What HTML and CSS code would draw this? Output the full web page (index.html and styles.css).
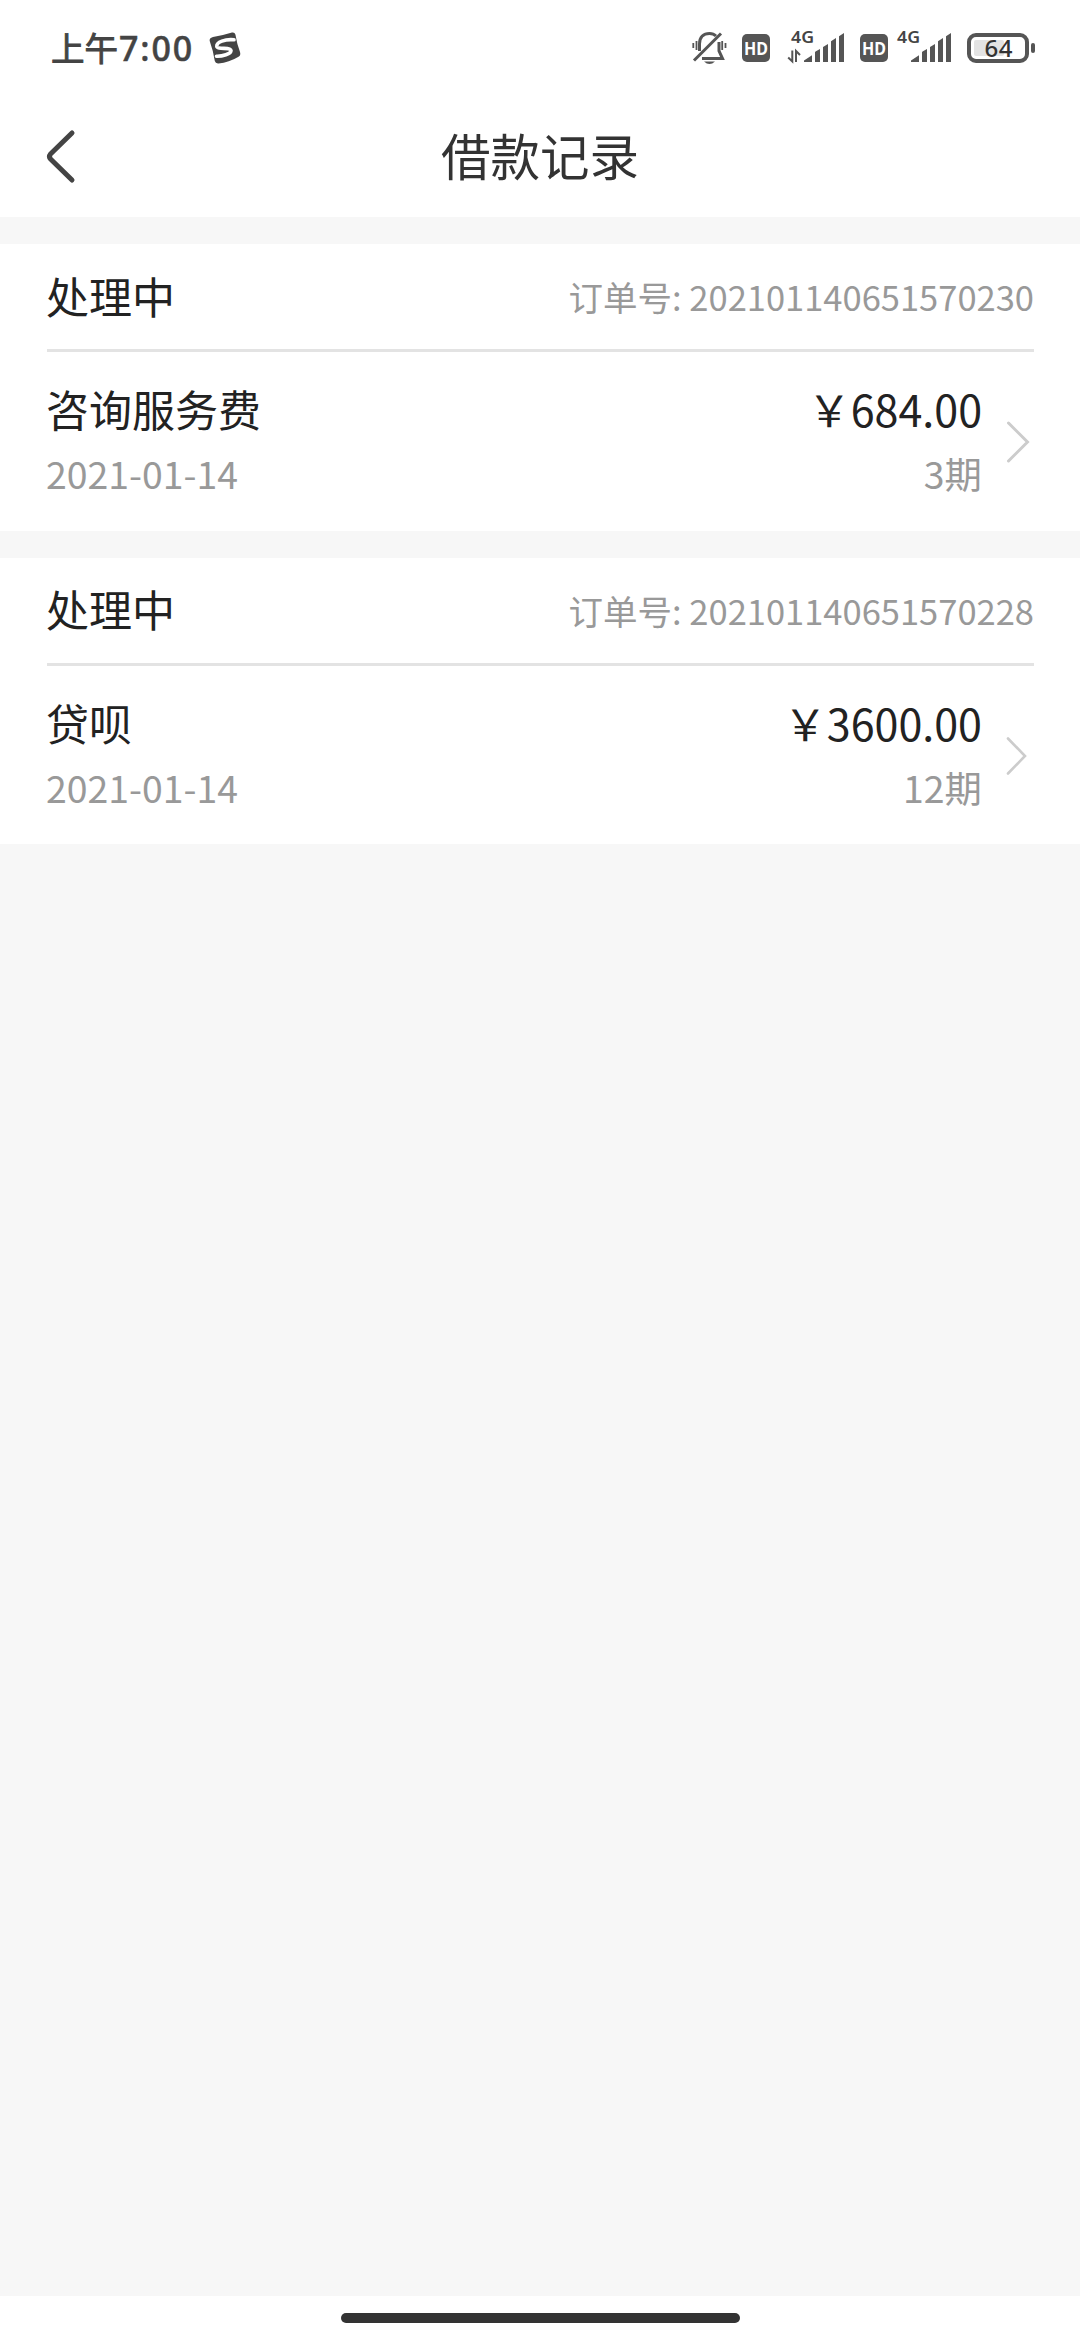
FILE: index.html
```html
<!DOCTYPE html>
<html lang="zh-CN">
<head>
<meta charset="utf-8">
<title>借款记录</title>
<link rel="stylesheet" href="styles.css">
</head>
<body>
<div class="screen">
  <div class="status-bar">
    <div class="clock"><span class="clock-period">上午</span><span class="clock-digits">7:00</span></div>
    <svg class="app-mark" width="32" height="32" viewBox="0 0 32 32">
      <path d="M4 5 Q14 3.5 23 .6 Q25.600 0 26.400 2.500 Q28 12 31 20 Q32 23.500 29.500 24.700 Q20 30.500 9.500 31.400 Q6.500 31.700 5.800 29 Q4 18 .7 9 Q0 6 4 5Z" fill="#444"/>
      <path d="M25 7.800 C16 7 7.500 10 7.800 14.200 C8.200 18 21.500 14.800 22 18.500 C22.200 22 13 24.500 7.500 24.300" fill="none" stroke="#fff" stroke-width="3.600" stroke-linecap="round"/>
    </svg>
    <div class="indicators">
      <svg class="bell" width="35" height="34" viewBox="0 0 35 34">
        <g fill="none" stroke="#555" stroke-width="3">
          <path d="M7.500 20 V13 C7.500 6 11.500 2.500 17.500 2.500 C20.500 2.500 22.500 3.500 24 5"/>
          <path d="M27 11 V20 L30.500 27.500 H10"/>
          <path d="M2 29.500 L29 2.500"/>
          <path d="M1.300 12 V17 M4.500 10 V19 M30.200 10 V19 M33.500 12 V17" stroke-width="1.800"/>
        </g>
        <path d="M12 30.500 H23 Q17.500 35.500 12 30.500Z" fill="#555"/>
      </svg>
      <svg class="hd" width="28" height="28" viewBox="0 0 28 28"><rect width="28" height="28" rx="5" fill="#555"/><text class="hd-text" x="14" y="20.800" text-anchor="middle" textLength="24" lengthAdjust="spacingAndGlyphs">HD</text></svg>
      <svg class="signal-data" width="58" height="34" viewBox="0 0 58 34">
        <text class="net-text" x="4" y="12.300" textLength="23" lengthAdjust="spacingAndGlyphs">4G</text>
        <path d="M5.300 19.500 V30.500 L1.200 26.500 M9 31 V20 L13 24" fill="none" stroke="#555" stroke-width="2"/>
        <path d="M17 31 V29.500 L25 24.200 V31Z M28 31 V21.500 Q28 20.800 28.500 20.400 L33 18 V31Z M36 31 V16 L41 13 V31Z M44 31 V10.300 L49 7 V31Z M52 31 V5.300 L57 2 V31Z" fill="#555"/>
      </svg>
      <svg class="hd" width="28" height="28" viewBox="0 0 28 28"><rect width="28" height="28" rx="5" fill="#555"/><text class="hd-text" x="14" y="20.800" text-anchor="middle" textLength="24" lengthAdjust="spacingAndGlyphs">HD</text></svg>
      <svg class="signal" width="55" height="34" viewBox="0 0 55 34">
        <text class="net-text" x="0" y="12.300" textLength="23" lengthAdjust="spacingAndGlyphs">4G</text>
        <path d="M14 31 V29.500 L22 24.200 V31Z M25 31 V21.500 Q25 20.800 25.500 20.400 L30 18 V31Z M33 31 V16 L38 13 V31Z M41 31 V10.300 L46 7 V31Z M49 31 V5.300 L54 2 V31Z" fill="#555"/>
      </svg>
      <svg class="battery" width="69" height="30" viewBox="0 0 69 30">
        <rect x="2" y="2" width="58" height="26" rx="7" fill="#fff" stroke="#555" stroke-width="4"/>
        <rect x="7" y="7" width="30" height="16" rx="2" fill="#e3e3e3"/>
        <rect x="64" y="10" width="4" height="10" rx="2" fill="#555"/>
        <text class="battery-text" x="31.500" y="23.500" text-anchor="middle" textLength="28">64</text>
      </svg>
    </div>
  </div>

  <header class="nav">
    <svg class="back" width="30" height="54" viewBox="0 0 30 54"><path d="M27 4 L5.500 25 Q3.500 27.500 5.500 30 L27 51" fill="none" stroke="#444" stroke-width="5" stroke-linecap="round" stroke-linejoin="round"/></svg>
    <h1 class="title">借款记录</h1>
  </header>

  <main class="records">
    <section class="card">
      <div class="card-head">
        <span class="state">处理中</span>
        <span class="order">订单号: 202101140651570230</span>
      </div>
      <div class="card-body">
        <div class="info"><div class="name">咨询服务费</div><div class="meta">2021-01-14</div></div>
        <div class="info info-end"><div class="name">￥684.00</div><div class="meta">3期</div></div>
        <svg class="chevron" width="24" height="44" viewBox="0 0 24 44"><path d="M2.500 3 L21.500 22 L2.500 41" fill="none" stroke="#ccc" stroke-width="3" stroke-linecap="round"/></svg>
      </div>
    </section>
    <section class="card">
      <div class="card-head">
        <span class="state">处理中</span>
        <span class="order">订单号: 202101140651570228</span>
      </div>
      <div class="card-body">
        <div class="info"><div class="name">贷呗</div><div class="meta">2021-01-14</div></div>
        <div class="info info-end"><div class="name">￥3600.00</div><div class="meta">12期</div></div>
        <svg class="chevron" width="24" height="44" viewBox="0 0 24 44"><path d="M2 4.500 L19 22 L2 39.500" fill="none" stroke="#ccc" stroke-width="2.600" stroke-linecap="round"/></svg>
      </div>
    </section>
  </main>

  <footer class="gesture-area"><div class="gesture-bar"></div></footer>
</div>
</body>
</html>
```
FILE: styles.css
```css
* {
  box-sizing: border-box;
}

body {
  margin: 0;
  background: #f7f7f7;
  font-family: "Noto Sans CJK SC", sans-serif;
}

svg {
  display: block;
  flex: none;
  overflow: visible;
}

.screen {
  display: flex;
  flex-direction: column;
  width: 1080px;
  height: 2340px;
}

.status-bar {
  display: flex;
  align-items: center;
  height: 96px;
  padding: 0 44px 0 51px;
  background: #fff;
}

.clock {
  display: flex;
  align-items: baseline;
  width: 158px;
  padding-bottom: 1px;
  color: #444;
  font-size: 33.500px;
  line-height: 48px;
  white-space: nowrap;
}

.clock-period {
  -webkit-text-stroke: 0.9px #444;
}

.clock-digits {
  font-family: "Noto Sans", sans-serif;
  font-weight: 500;
  font-size: 34px;
  letter-spacing: 1.9px;
  margin-left: 1px;
  -webkit-text-stroke: 0.5px #444;
}

.indicators {
  display: flex;
  align-items: center;
  margin-left: auto;
}

.hd {
  margin-left: 15px;
}

.signal-data {
  margin-left: 17px;
}

.signal-data + .hd {
  margin-left: 15px;
}

.signal {
  margin-left: 9px;
}

.battery {
  margin-left: 15px;
}

.hd-text,
.net-text,
.battery-text {
  font-family: "Noto Sans", sans-serif;
}

.hd-text {
  fill: #fff;
  font-size: 18.5px;
  font-weight: 700;
}

.net-text {
  fill: #444;
  font-size: 16px;
  font-weight: 600;
}

.battery-text {
  fill: #333;
  font-size: 24px;
  font-weight: 500;
}

.nav {
  display: grid;
  grid-template-columns: 1fr auto 1fr;
  align-items: center;
  height: 121px;
  padding: 0 45px 1px;
  background: #fff;
}

.title {
  margin: 0;
  padding-bottom: 2px;
  color: #333;
  font-size: 49.500px;
  font-weight: 400;
  line-height: 72px;
}

.records {
  display: flex;
  flex-direction: column;
  flex: 1;
  gap: 27.2px;
  padding-top: 27px;
}

.card {
  height: 286.600px;
  padding: 0 46px;
  background: #fff;
}

.card-head {
  display: flex;
  justify-content: space-between;
  align-items: center;
  height: 108px;
  margin-left: 1px;
  border-bottom: 3px solid #e3e3e3;
}

.state {
  margin-left: -1px;
  padding-bottom: 4px;
  color: #222;
  font-size: 43px;
  line-height: 60px;
}

.order {
  padding-bottom: 1px;
  color: #999;
  font-size: 34.500px;
  line-height: 50px;
}

.card-body {
  display: flex;
  align-items: center;
  height: 178px;
}

.info {
  flex: 1;
}

.info-end {
  text-align: right;
}

.name {
  padding-top: 2px;
  color: #222;
  font-size: 43px;
  line-height: 62px;
}

.meta {
  color: #999;
  font-size: 37.400px;
  line-height: 68px;
}

.chevron {
  margin: 2px 4px 0 24px;
}

.gesture-area {
  display: flex;
  justify-content: center;
  height: 44px;
  padding-top: 17px;
  background: #fff;
}

.gesture-bar {
  width: 399px;
  height: 10px;
  border-radius: 5px;
  background: #333;
}
```
